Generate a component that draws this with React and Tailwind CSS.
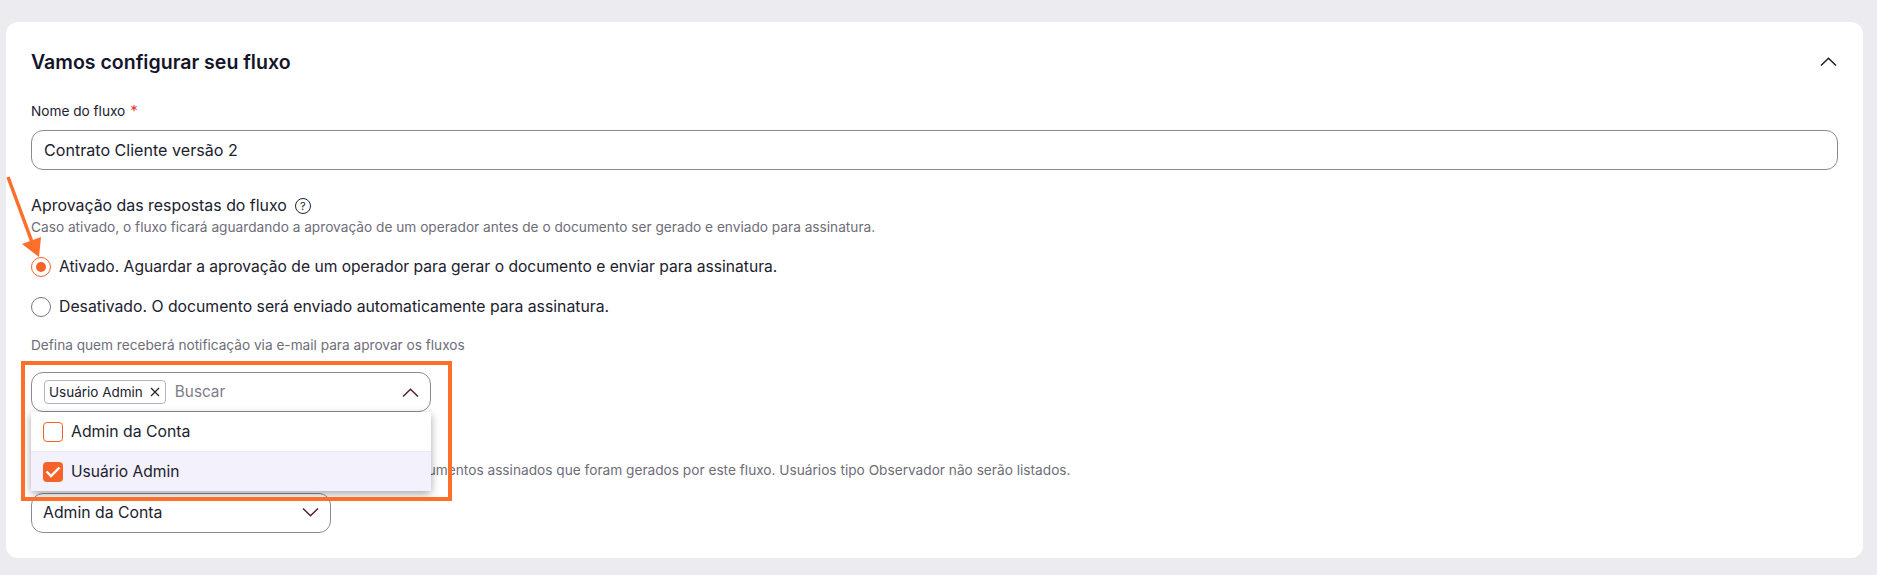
import React from "react";

const Chevron = ({ up, className }) => (
  <svg viewBox="0 0 17 9" width="17" height="9" fill="none" stroke="currentColor" strokeWidth="1.5" className={className}>
    <path d={up ? "M1 8.5 L8.5 1.2 L16 8.5" : "M1 0.5 L8.5 7.8 L16 0.5"} />
  </svg>
);

const Radio = ({ on, size, children }) => (
  <div className={`flex items-center h-[40px] gap-[8px] text-[#21212e] ${size}`}>
    <span className={`flex items-center justify-center w-[20px] h-[20px] rounded-full border bg-white ${on ? "border-[#f7622a]" : "border-[#77767f]"}`}>
      {on && <span className="w-[10px] h-[10px] rounded-full bg-[#f7622a]" />}
    </span>
    <span>{children}</span>
  </div>
);

export default function App() {
  return (
    <div className="w-[1877px] h-[575px] bg-[#ebebf0] pl-[6px] pr-[14px] pt-[22px] overflow-hidden" style={{ fontFamily: "Inter, 'Noto Sans', sans-serif" }}>
      <div className="relative bg-white rounded-[12px] h-[536px] pl-[25px] pr-[25px] pt-[26px]">
        <div className="flex items-center justify-between h-[28px]">
          <h1 className="text-[19.55px] font-semibold text-[#14142b] pt-[1px]">Vamos configurar seu fluxo</h1>
          <Chevron up className="text-[#21212e] mr-[1px] mb-[2px]" />
        </div>

        <label className="block mt-[25px] h-[20px] leading-[20px] text-[13.65px] text-[#21212e]">
          Nome do fluxo <span className="text-[#e53935] text-[15px] ml-[1px]">*</span>
        </label>
        <div className="mt-[9px] h-[40px] rounded-[12px] border border-[#8b8a92] flex items-center px-[12px] pt-[1px] text-[16.1px] text-[#21212e]">
          Contrato Cliente versão 2
        </div>

        <div className="mt-[24px] h-[24px] flex items-center gap-[8px] text-[15.9px] text-[#21212e]">
          <span>Aprovação das respostas do fluxo</span>
          <span className="flex items-center justify-center w-[16px] h-[16px] rounded-full border border-[#21212e] text-[11px] leading-none">?</span>
        </div>
        <p className="h-[18px] leading-[18px] text-[13.68px] text-[#6e6d78]">
          Caso ativado, o fluxo ficará aguardando a aprovação de um operador antes de o documento ser gerado e enviado para assinatura.
        </p>

        <div className="mt-[11px]">
          <Radio on size="text-[15.62px]">Ativado. Aguardar a aprovação de um operador para gerar o documento e enviar para assinatura.</Radio>
          <Radio size="text-[15.77px]">Desativado. O documento será enviado automaticamente para assinatura.</Radio>
        </div>

        <p className="mt-[9px] h-[18px] leading-[18px] text-[13.65px] text-[#6e6d78]">
          Defina quem receberá notificação via e-mail para aprovar os fluxos
        </p>

        <div className="relative mt-[18px] w-[400px] z-10">
          <div className="h-[40px] rounded-[12px] border border-[#8b8a92] bg-white flex items-center pl-[12px] pr-[11px]">
            <span className="flex items-center h-[24px] rounded-[4px] border border-[#b5b4bb] pl-[4px] pr-[5px] gap-[7px] text-[13.5px] text-[#21212e]">
              <span>Usuário Admin</span>
              <svg viewBox="0 0 10 10" width="10" height="10" fill="none" stroke="#21212e" strokeWidth="1.2"><path d="M1 1 L9 9 M9 1 L1 9" /></svg>
            </span>
            <span className="ml-[9px] pt-[1px] text-[15.3px] text-[#7d7c86]">Buscar</span>
            <Chevron up className="ml-auto text-[#5a1e35]" />
          </div>
          <div className="absolute left-0 right-0 top-[40px] bg-white rounded-b-[4px] shadow-[0_3px_8px_rgba(0,0,0,0.35)]">
            <div className="flex items-center h-[40px] pl-[12px] gap-[8px] text-[15.8px] text-[#21212e] border-b border-[#ecebf2]">
              <span className="w-[20px] h-[20px] rounded-[4px] border border-[#f7622a] bg-white" />
              <span>Admin da Conta</span>
            </div>
            <div className="flex items-center h-[39px] pl-[12px] gap-[8px] text-[15.6px] text-[#21212e] bg-[#f3f1fb]">
              <span className="flex items-center justify-center w-[20px] h-[20px] rounded-[4px] bg-[#f7622a]">
                <svg viewBox="0 0 20 20" width="20" height="20" fill="none" stroke="#fff" strokeWidth="2.4"><path d="M3.5 9.5 L8 14 L16.5 5.5" /></svg>
              </span>
              <span>Usuário Admin</span>
            </div>
          </div>
          <div className="absolute left-[-10px] top-[-11px] w-[431px] h-[140px] border-[4px] border-[#ff6f2c] pointer-events-none" />
        </div>

        <div className="mt-[27px] h-[20px] leading-[20px] text-[15.7px] text-[#21212e]">Visualizadores</div>
        <p className="mt-[2px] h-[18px] leading-[18px] text-[13.68px] text-[#6e6d78] whitespace-nowrap">
          Selecione o usuário responsável por visualizar e obter os documentos assinados que foram gerados por este fluxo. Usuários tipo Observador não serão listados.
        </p>

        <div className="mt-[14px] w-[300px] h-[40px] rounded-[12px] border border-[#8b8a92] bg-white flex items-center pl-[11px] pr-[11px] pb-[1px] text-[15.8px] text-[#21212e]">
          <span>Admin da Conta</span>
          <Chevron className="ml-auto text-[#5a1e35]" />
        </div>

        <svg className="absolute left-[-6px] top-[150px] pointer-events-none" width="50" height="100" viewBox="0 0 50 100" fill="none">
          <path d="M8 5 L32 70" stroke="#ff6f2c" strokeWidth="3.5" />
          <path d="M22 72 L41 65 L39 85 Z" fill="#ff6f2c" />
        </svg>
      </div>
    </div>
  );
}
